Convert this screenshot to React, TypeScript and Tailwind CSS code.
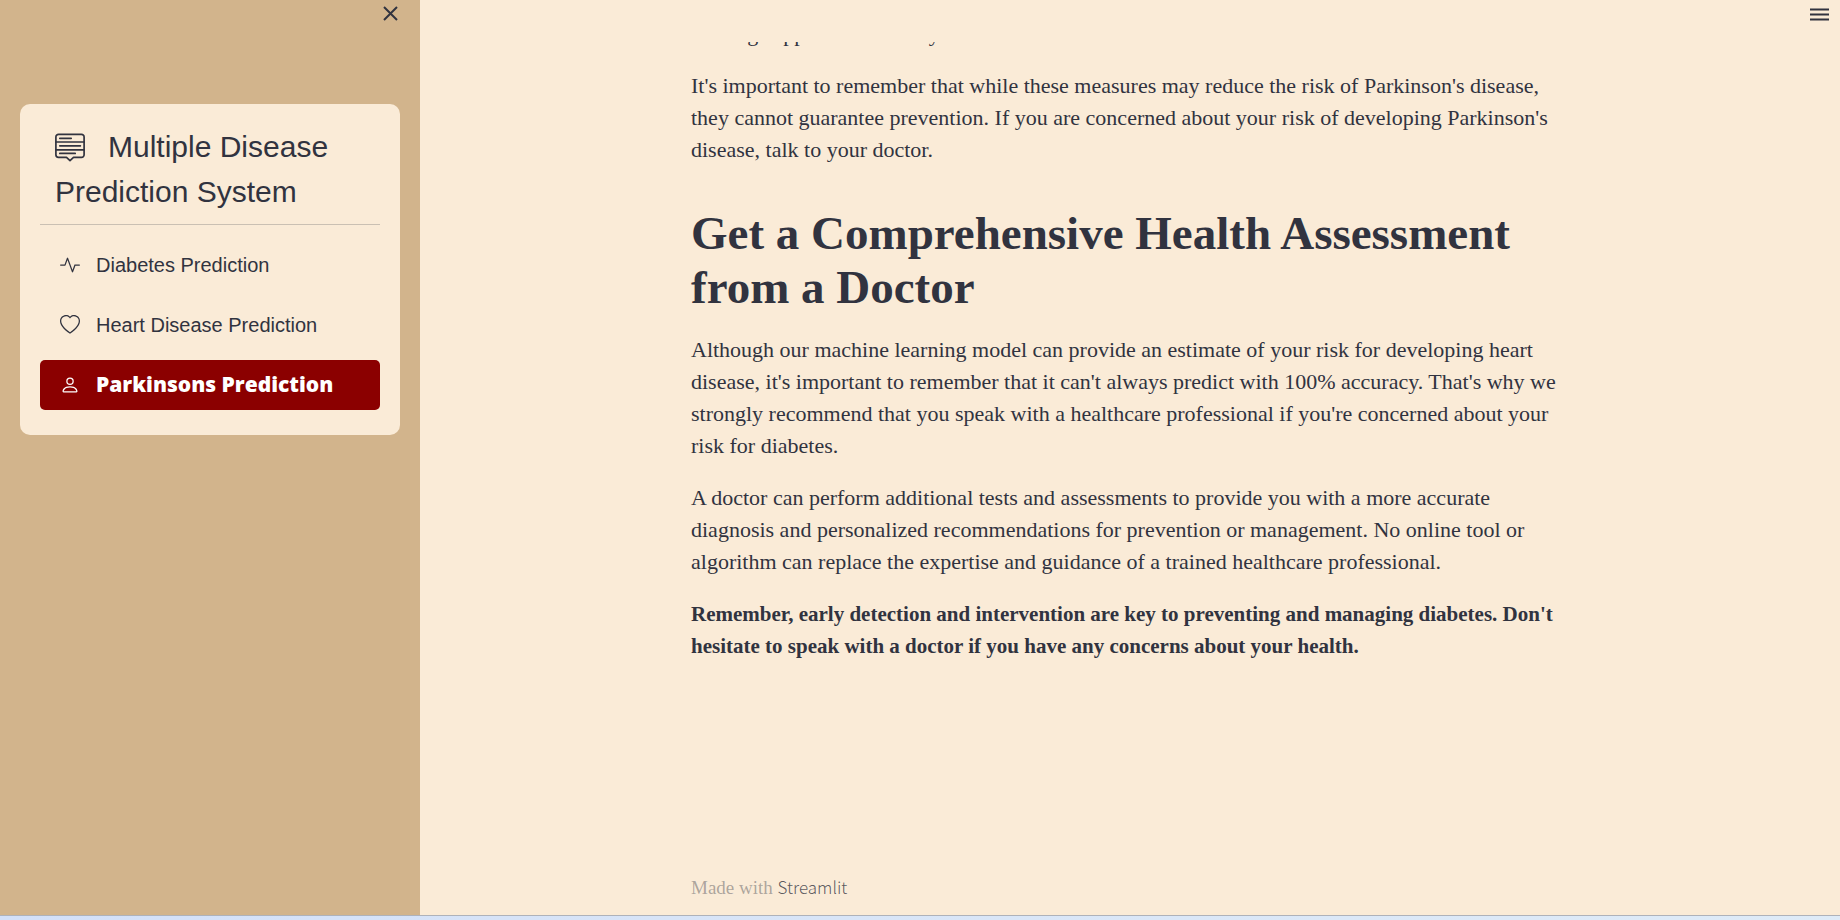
import type { ReactNode } from "react";
import { BsActivity, BsHeart, BsPerson } from "react-icons/bs";

function MessageIcon() {
  return (
    <svg
      viewBox="0 0 30 30"
      className="mr-[23px] inline-block h-[30px] w-[30px] align-[-6px]"
      fill="none"
      stroke="currentColor"
      strokeWidth="1.7"
      strokeLinecap="round"
      strokeLinejoin="round"
      aria-hidden="true"
    >
      <path d="M3.5 1.4h23a2.6 2.6 0 0 1 2.6 2.6v17.8a2.6 2.6 0 0 1-2.6 2.6h-8l-3.5 3.2-3.5-3.2h-8A2.6 2.6 0 0 1 .9 21.8V4a2.6 2.6 0 0 1 2.6-2.6Z" />
      <path d="M1 9h28M1 16.8h28M4.8 5.3h11.4M4.8 12.8h20.6M4.8 20.4h15.4" />
    </svg>
  );
}

function NavItem({ icon, label, active = false }: { icon: ReactNode; label: string; active?: boolean }) {
  return (
    <li>
      <a
        href="#"
        aria-current={active ? "page" : undefined}
        className={
          active
            ? "flex h-[50px] items-center gap-4 rounded-[5px] bg-[#8b0000] px-5 font-['Open_Sans',sans-serif] text-[21px] font-extrabold text-white"
            : "flex h-[50px] items-center gap-4 rounded-[5px] px-5 text-xl"
        }
      >
        {icon}
        {label}
      </a>
    </li>
  );
}

function Sidebar() {
  return (
    <aside className="flex w-[420px] shrink-0 flex-col bg-[#d2b48c] px-5">
      <div className="flex h-[104px] items-start justify-end pt-1">
        <button type="button" aria-label="Close sidebar" className="flex h-5 w-5 items-center justify-center">
          <svg viewBox="0 0 20 20" className="h-5 w-5" stroke="currentColor" strokeWidth="2" aria-hidden="true">
            <path d="M4 3l13 13M17 3L4 16" />
          </svg>
        </button>
      </div>
      <nav className="rounded-[10px] bg-[#faebd7] px-5 pt-5 pb-[25px] font-['Liberation_Sans',Arial,sans-serif]">
        <h1 className="border-b border-[#cac0b3] px-[15px] pb-[10px] text-3xl leading-[45px]">
          <MessageIcon />
          Multiple Disease Prediction System
        </h1>
        <ul className="mt-[15px] flex flex-col gap-[10px]">
          <NavItem icon={<BsActivity className="h-5 w-5" />} label="Diabetes Prediction" />
          <NavItem icon={<BsHeart className="h-5 w-5" />} label="Heart Disease Prediction" />
          <NavItem icon={<BsPerson className="h-5 w-5" />} label="Parkinsons Prediction" active />
        </ul>
      </nav>
    </aside>
  );
}

function Article() {
  return (
    <article className="flex flex-col gap-5 text-[22px] leading-8">
      <div className="flex h-2 flex-col justify-end overflow-hidden">
        <p>seeking support if necessary</p>
      </div>
      <p>
        It's important to remember that while these measures may reduce the risk of Parkinson's disease,
        <br />
        they cannot guarantee prevention. If you are concerned about your risk of developing Parkinson's
        <br />
        disease, talk to your doctor.
      </p>
      <h2 className="mt-5 text-[47px] leading-[54px] font-bold">
        Get a Comprehensive Health Assessment
        <br />
        from a Doctor
      </h2>
      <p>
        Although our machine learning model can provide an estimate of your risk for developing heart
        <br />
        disease, it's important to remember that it can't always predict with 100% accuracy. That's why we
        <br />
        strongly recommend that you speak with a healthcare professional if you're concerned about your
        <br />
        risk for diabetes.
      </p>
      <p>
        A doctor can perform additional tests and assessments to provide you with a more accurate
        <br />
        diagnosis and personalized recommendations for prevention or management. No online tool or
        <br />
        algorithm can replace the expertise and guidance of a trained healthcare professional.
      </p>
      <p className="text-[21px] leading-8 font-bold">
        Remember, early detection and intervention are key to preventing and managing diabetes. Don't
        <br />
        hesitate to speak with a doctor if you have any concerns about your health.
      </p>
    </article>
  );
}

export default function App() {
  return (
    <div className="flex min-h-screen flex-col bg-[#faebd7] text-[#31333f]">
      <div className="flex grow">
        <Sidebar />
        <main className="flex min-w-0 grow flex-col font-['Liberation_Serif','Times_New_Roman',serif]">
          <header className="flex h-[42px] items-start justify-end pt-1 pr-[10px]">
            <button type="button" aria-label="Main menu" className="flex h-5 w-5 items-center justify-center">
              <svg viewBox="0 0 20 20" className="h-5 w-5" stroke="currentColor" strokeWidth="2" aria-hidden="true">
                <path d="M0 5.5h19M0 10.5h19M0 15.5h19" />
              </svg>
            </button>
          </header>
          <div className="mx-auto flex w-full max-w-[918px] grow flex-col px-5">
            <Article />
            <footer className="mt-auto pb-[11px] text-[19px] leading-8 text-[#31333f]/40">
              Made with{" "}
              <a href="#" className="font-['Noto_Sans_CJK_JP',sans-serif] text-[17px] font-light text-[#31333f]/80">
                Streamlit
              </a>
            </footer>
          </div>
        </main>
      </div>
      <div className="h-[5px] border-t border-[#aeb2ba] bg-linear-to-r from-[#d3e0f8] to-[#deebf8]" />
    </div>
  );
}
